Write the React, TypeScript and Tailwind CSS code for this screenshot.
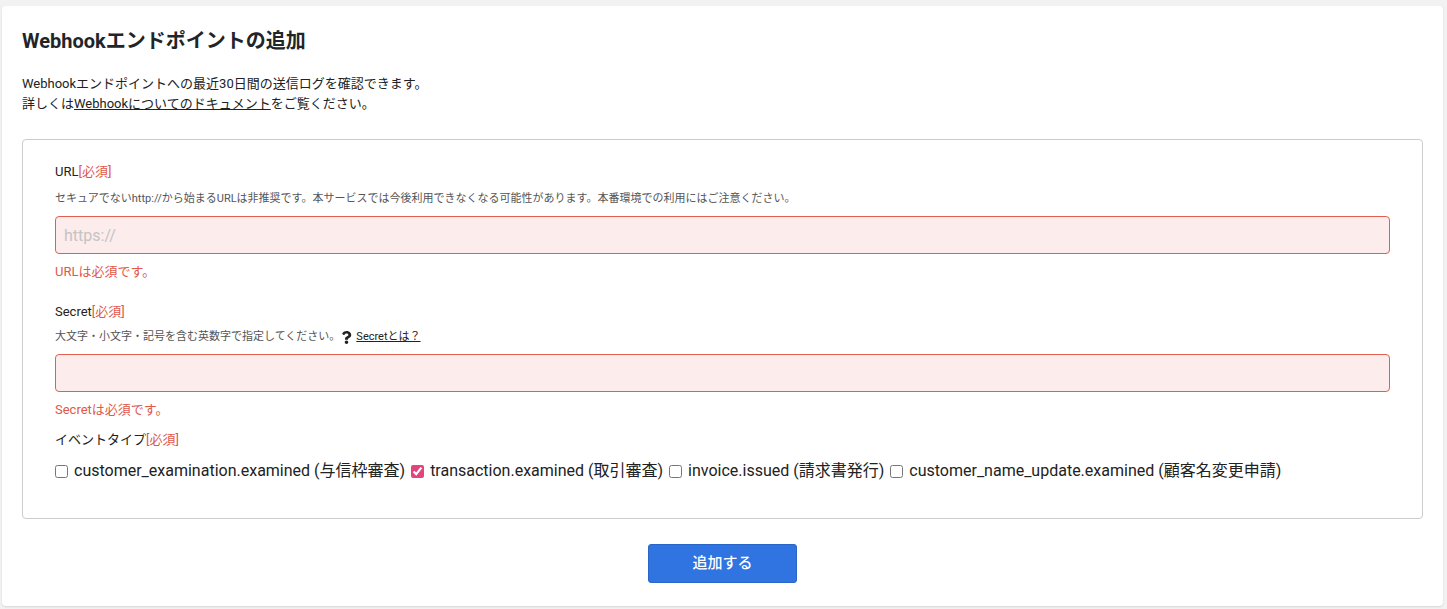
import { FaQuestion } from "react-icons/fa";

const events = [
  { id: "customer_examination", label: "customer_examination.examined (与信枠審査)", checked: false },
  { id: "transaction", label: "transaction.examined (取引審査)", checked: true },
  { id: "invoice", label: "invoice.issued (請求書発行)", checked: false },
  { id: "customer_name_update", label: "customer_name_update.examined (顧客名変更申請)", checked: false },
];

function Required() {
  return <span className="text-[#e0584a]">[必須]</span>;
}

export default function App() {
  return (
    <div
      className="min-h-[609px] bg-[#f2f2f2] pt-[6px] pl-[2px] pr-[4px] pb-[2px] text-[#222]"
      style={{ fontFamily: "Roboto, 'Noto Sans CJK JP', sans-serif" }}
    >
      <div className="rounded-[4px] bg-white px-5 pt-[21px] pb-[23px] shadow-[0_1px_2px_rgba(0,0,0,0.12)]">
        <h1 className="text-[20px] font-bold leading-[28px] text-[#1f2528]">Webhookエンドポイントの追加</h1>

        <div className="mt-[19px] text-[13px] leading-[20px] text-[#222]">
          <p>Webhookエンドポイントへの最近30日間の送信ログを確認できます。</p>
          <p>
            詳しくは<a href="#" className="underline">Webhookについてのドキュメント</a>をご覧ください。
          </p>
        </div>

        <div className="mt-[25px] rounded-[4px] border border-[#cccccc] px-8 pt-[22px] pb-[36px]">
          <div className="text-[13px] leading-[20px]">
            URL<Required />
          </div>
          <p className="mt-[8px] text-[11px] leading-[18px] text-[#555]">
            セキュアでないhttp://から始まるURLは非推奨です。本サービスでは今後利用できなくなる可能性があります。本番環境での利用にはご注意ください。
          </p>
          <input
            placeholder="https://"
            className="mt-[8px] block h-[38px] w-full rounded-[4px] border border-[#e0604f] bg-[#fcecec] px-2 text-[16px] text-[#222] placeholder:text-[#c4c4c4] outline-none"
          />
          <p className="mt-[9px] text-[13px] leading-[18px] text-[#e0584a]">URLは必須です。</p>

          <div className="mt-[21px] text-[13px] leading-[20px]">
            Secret<Required />
          </div>
          <div className="mt-[6px] flex items-center text-[11px] leading-[18px] text-[#555]">
            <span>大文字・小文字・記号を含む英数字で指定してください。</span>
            <FaQuestion className="ml-0 mr-[3px] text-[13px] text-[#222]" />
            <a href="#" className="text-[11px] text-[#222] underline">Secretとは？</a>
          </div>
          <input className="mt-[8px] block h-[38px] w-full rounded-[4px] border border-[#e0604f] bg-[#fcecec] px-2 text-[16px] outline-none" />
          <p className="mt-[9px] text-[13px] leading-[18px] text-[#e0584a]">Secretは必須です。</p>

          <div className="mt-[11px] text-[13px] leading-[20px]">
            イベントタイプ<Required />
          </div>
          <div className="mt-[10px] flex flex-wrap items-center gap-x-[6px] text-[16px] leading-[22px]">
            {events.map((e) => (
              <label key={e.id} className="flex items-center gap-[6px]">
                <input
                  type="checkbox"
                  defaultChecked={e.checked}
                  className="m-0 h-[13px] w-[13px] accent-[#e4437c]"
                />
                <span>{e.label}</span>
              </label>
            ))}
          </div>
        </div>

        <div className="mt-[25px] flex justify-center">
          <button className="h-[39px] w-[149px] rounded-[3px] border border-[#2a66c8] bg-[#2f74e0] text-[15px] font-medium text-white">
            追加する
          </button>
        </div>
      </div>
    </div>
  );
}
